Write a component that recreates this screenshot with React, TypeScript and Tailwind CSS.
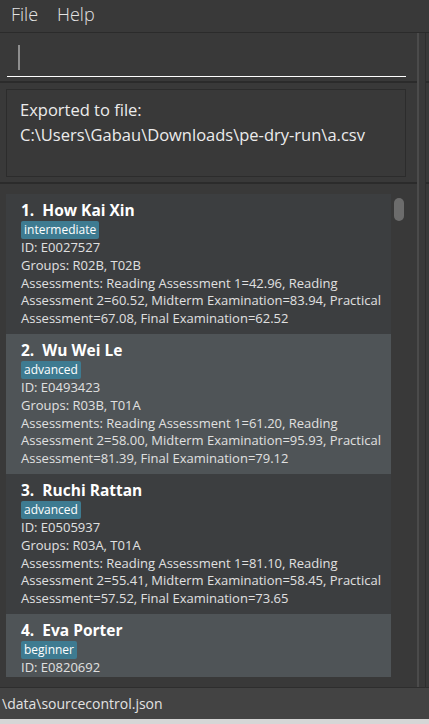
import React from "react";

type Student = {
  idx: number;
  name: string;
  level: string;
  id: string;
  groups: string;
  lines: string[];
  partial?: boolean;
};

const students: Student[] = [
  {
    idx: 1,
    name: "How Kai Xin",
    level: "intermediate",
    id: "E0027527",
    groups: "R02B, T02B",
    lines: [
      "Assessments: Reading Assessment 1=42.96, Reading",
      "Assessment 2=60.52, Midterm Examination=83.94, Practical",
      "Assessment=67.08, Final Examination=62.52",
    ],
  },
  {
    idx: 2,
    name: "Wu Wei Le",
    level: "advanced",
    id: "E0493423",
    groups: "R03B, T01A",
    lines: [
      "Assessments: Reading Assessment 1=61.20, Reading",
      "Assessment 2=58.00, Midterm Examination=95.93, Practical",
      "Assessment=81.39, Final Examination=79.12",
    ],
  },
  {
    idx: 3,
    name: "Ruchi Rattan",
    level: "advanced",
    id: "E0505937",
    groups: "R03A, T01A",
    lines: [
      "Assessments: Reading Assessment 1=81.10, Reading",
      "Assessment 2=55.41, Midterm Examination=58.45, Practical",
      "Assessment=57.52, Final Examination=73.65",
    ],
  },
  {
    idx: 4,
    name: "Eva Porter",
    level: "beginner",
    id: "E0820692",
    groups: "",
    lines: [],
    partial: true,
  },
];

function Card({ s }: { s: Student }) {
  const light = s.idx % 2 === 0;
  return (
    <div
      className={
        "h-[140px] shrink-0 px-[15px] pt-[6px] " +
        (light ? "bg-[#4f5457]" : "bg-[#3c3e40]")
      }
    >
      <div className="text-[15.5px] leading-[20px] font-bold text-white whitespace-pre">
        {s.idx + ".  " + s.name}
      </div>
      <div className="mt-[1px] flex">
        <span className="h-[18px] px-[3px] leading-[18px] text-[12px] text-white bg-[#3e7b91] rounded-[2px]">
          {s.level}
        </span>
      </div>
      <div className="text-[13px] leading-[17.75px] text-[#e0e0e0] whitespace-nowrap">
        <div>ID: {s.id}</div>
        {!s.partial && <div>Groups: {s.groups}</div>}
        {s.lines.map((l, i) => (
          <div key={i}>{l}</div>
        ))}
      </div>
    </div>
  );
}

export default function App() {
  return (
    <div
      className="w-[429px] h-[724px] bg-[#393939] flex flex-col overflow-hidden text-[#e6e6e6]"
      style={{ fontFamily: "'Open Sans', 'Noto Sans', sans-serif" }}
    >
      {/* menu bar */}
      <div className="h-[33px] shrink-0 border-b border-[#2b2b2b] flex pt-[2px] text-[18px] leading-[24px] font-light text-[#e4e4e4]">
        <span className="ml-[11px] w-[46px]">File</span>
        <span>Help</span>
      </div>

      {/* main */}
      <div className="h-[654px] shrink-0 flex">
        <div className="w-[417px] shrink-0 flex flex-col">
          {/* command box */}
          <div className="h-[48px] shrink-0">
            <div className="ml-[18px] mt-[12px] w-[2px] h-[25px] bg-[#8e8e8e]" />
            <div className="ml-[7px] mt-[6px] w-[399px] h-[1px] bg-white" />
          </div>
          <div className="h-[2px] shrink-0 bg-[#2b2b2b]" />
          {/* result box */}
          <div className="h-[99px] shrink-0 pt-[6px] pl-[6px]">
            <div className="w-[400px] h-[88px] border border-[#2c2c2c] pl-[13px] pt-[7px] text-[16.5px] leading-[25px] text-[#ececec] whitespace-nowrap">
              <div>Exported to file:</div>
              <div>C:\Users\Gabau\Downloads\pe-dry-run\a.csv</div>
            </div>
          </div>
          <div className="h-[2px] shrink-0 bg-[#2b2b2b]" />
          {/* list */}
          <div className="flex-1 min-h-0 pt-[10px] pb-[10px] pl-[6px]">
            <div className="h-full w-[400px] flex overflow-hidden">
              <div className="w-[385px] shrink-0 flex flex-col overflow-hidden">
                {students.map((s) => (
                  <Card key={s.idx} s={s} />
                ))}
              </div>
              <div className="flex-1 pl-[3px] pt-[4px]">
                <div className="w-[10px] h-[23px] rounded-full bg-[#6c6c6c]" />
              </div>
            </div>
          </div>
        </div>
        <div className="w-[2px] shrink-0 bg-[#4b4b4b]" />
        <div className="w-[6px] shrink-0" />
        <div className="w-[1px] shrink-0 bg-[#2e2e2e]" />
        <div className="flex-1 flex flex-col">
          <div className="h-[48px]" />
          <div className="h-[2px] bg-[#2b2b2b]" />
          <div className="h-[99px]" />
          <div className="h-[2px] bg-[#2b2b2b]" />
        </div>
      </div>

      {/* status bar */}
      <div className="h-[32px] shrink-0 border-t border-[#2e2e2e] bg-[#434343] pt-[6px] overflow-hidden">
        <div className="ml-[2px] text-[14px] leading-[20px] text-[#e2e2e2] whitespace-nowrap">
          \data\sourcecontrol.json
        </div>
      </div>
      <div className="h-[5px] shrink-0 bg-[#d6d6d6]" />
    </div>
  );
}
